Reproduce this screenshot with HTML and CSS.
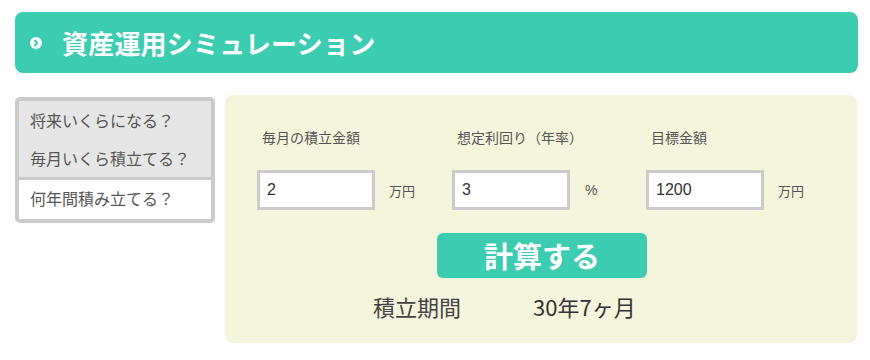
FILE: index.html
```html
<!DOCTYPE html>
<html lang="ja">
<head>
<meta charset="utf-8">
<link rel="stylesheet" href="styles.css">
</head>
<body>
<div class="page">
  <header class="title-bar">
    <svg class="title-icon" width="12" height="12" viewBox="0 0 12 12">
      <circle cx="6" cy="6" r="6" fill="#fff"/>
      <path d="M4.8 3.5 L7.2 6 L4.8 8.5" fill="none" stroke="#3ccdb0" stroke-width="2" stroke-linecap="round" stroke-linejoin="round"/>
    </svg>
    <h1 class="title">資産運用シミュレーション</h1>
  </header>
  <div class="main">
    <div class="tabs">
      <div class="tab">将来いくらになる？</div>
      <div class="tab">毎月いくら積立てる？</div>
      <div class="tab tab-active">何年間積み立てる？</div>
    </div>
    <div class="panel">
      <div class="fields">
        <div class="field">
          <div class="label">毎月の積立金額</div>
          <div class="input-row">
            <input class="num" type="text" value="2">
            <span class="unit">万円</span>
          </div>
        </div>
        <div class="field">
          <div class="label">想定利回り（年率）</div>
          <div class="input-row">
            <input class="num" type="text" value="3">
            <span class="unit unit-pct">%</span>
          </div>
        </div>
        <div class="field">
          <div class="label">目標金額</div>
          <div class="input-row">
            <input class="num" type="text" value="1200">
            <span class="unit">万円</span>
          </div>
        </div>
      </div>
      <div class="btn-row">
        <button class="calc">計算する</button>
      </div>
      <div class="result">
        <span class="result-label">積立期間</span>
        <span class="result-value">30年7ヶ月</span>
      </div>
    </div>
  </div>
</div>
</body>
</html>
```

FILE: styles.css
```css
* { box-sizing: border-box; }
body {
  margin: 0;
  background: #fff;
  font-family: "Noto Sans CJK JP", "Noto Sans", sans-serif;
  color: #555;
}
.page {
  padding: 12px 0 0 15px;
  width: 858px;
}
.title-bar {
  height: 61px;
  background: #3ccdb0;
  border-radius: 8px;
  display: flex;
  align-items: center;
  padding-left: 15px;
}
.title-icon { display: block; margin-right: 20px; margin-top: 1px; }
.title {
  margin: 0;
  color: #fff;
  font-size: 26px;
  font-weight: 700;
  line-height: 1;
  letter-spacing: 0.2px;
}
.main {
  display: flex;
  align-items: flex-start;
  gap: 10px;
  margin-top: 22px;
}
.tabs {
  width: 200px;
  margin-top: 2px;
  border: 4px solid #cbcbcb;
  border-radius: 5px;
  background: #e6e6e6;
  overflow: hidden;
}
.tab {
  height: 38px;
  line-height: 38px;
  padding-left: 11px;
  font-size: 16px;
  color: #555;
}
.tab-active {
  background: #fff;
  border-top: 3px solid #cbcbcb;
  height: 42px;
  line-height: 37px;
}
.panel {
  width: 632px;
  height: 248px;
  background: #f5f4dc;
  border-radius: 8px;
  padding: 32px 0 0 32px;
}
.fields { display: flex; }
.field { width: 195px; flex-shrink: 0; }
.field + .field { width: 195px; }
.field:nth-child(2) { width: 194px; }
.label {
  font-size: 14px;
  line-height: 20px;
  padding-left: 5px;
  color: #555;
}
.input-row {
  display: flex;
  align-items: center;
  margin-top: 23px;
}
.num {
  width: 118px;
  height: 40px;
  border: 3px solid #cbcbcb;
  background: #fff;
  padding: 0 7px;
  font-family: "Liberation Sans", Arial, sans-serif;
  font-size: 16px;
  color: #333;
  outline: none;
  margin: 0;
}
.unit {
  margin-left: 14px;
  font-size: 13px;
  color: #555;
}
.unit-pct {
  margin-left: 15px;
  font-family: "Liberation Sans", Arial, sans-serif;
  font-size: 14px;
}
.btn-row {
  display: flex;
  justify-content: center;
  margin-top: 23px;
  padding-right: 32px;
}
.calc {
  width: 210px;
  height: 45px;
  border: none;
  border-radius: 6px;
  background: #3ccdb0;
  color: #fff;
  font-family: "Noto Sans CJK JP", sans-serif;
  font-size: 29px;
  font-weight: 700;
  line-height: 1;
  padding: 0;
  margin-left: 2px;
}
.result {
  display: flex;
  margin-top: 13px;
  padding-left: 116px;
  font-size: 22px;
  line-height: 30px;
  color: #444;
}
.result-label { width: 160px; }
.result-value { color: #333; }
```
